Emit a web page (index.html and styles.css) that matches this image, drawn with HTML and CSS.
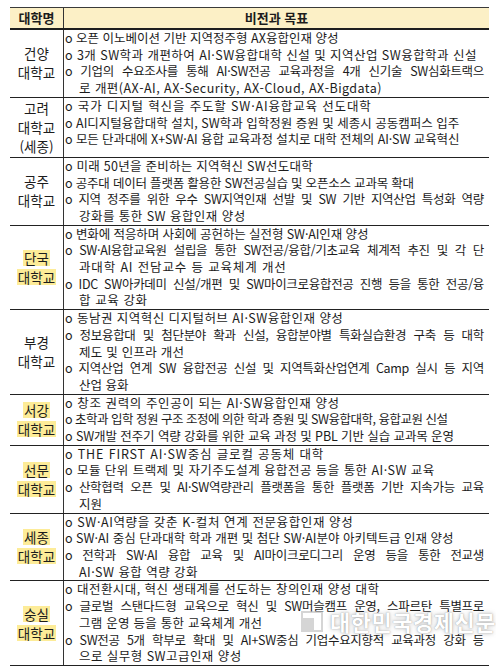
FILE: index.html
```html
<!DOCTYPE html>
<html lang="ko">
<head>
<meta charset="utf-8">
<title>대학별 비전과 목표</title>
<link rel="stylesheet" href="styles.css">
</head>
<body>
<div class="page">
  <div class="tbl">
    <div class="row head">
      <div class="uni"><span>대학명</span></div>
      <div class="goal">비전과 목표</div>
    </div>

    <div class="row">
      <div class="uni"><span>건양</span><span>대학교</span></div>
      <div class="goal">
        <div class="ln">o 오픈 이노베이션 기반 지역정주형 AX융합인재 양성</div>
        <div class="ln p4">o 3개 SW학과 개편하여 AI·SW융합대학 신설 및 지역산업 SW융합학과 신설</div>
        <div class="ln j">o 기업의 수요조사를 통해 AI·SW전공 교육과정을 4개 신기술 SW심화트랙으</div>
        <div class="ln c p4">로 개편(AX-AI, AX-Security, AX-Cloud, AX-Bigdata)</div>
      </div>
    </div>

    <div class="row">
      <div class="uni"><span>고려</span><span>대학교</span><span>(세종)</span></div>
      <div class="goal">
        <div class="ln p8">o 국가 디지털 혁신을 주도할 SW·AI융합교육 선도대학</div>
        <div class="ln">o AI디지털융합대학 설치, SW학과 입학정원 증원 및 세종시 공동캠퍼스 입주</div>
        <div class="ln m1">o 모든 단과대에 X+SW·AI 융합 교육과정 설치로 대학 전체의 AI·SW 교육혁신</div>
      </div>
    </div>

    <div class="row">
      <div class="uni"><span>공주</span><span>대학교</span></div>
      <div class="goal">
        <div class="ln p2">o 미래 50년을 준비하는 지역혁신 SW선도대학</div>
        <div class="ln m2">o 공주대 데이터 플랫폼 활용한 SW전공실습 및 오픈소스 교과목 확대</div>
        <div class="ln j">o 지역 정주를 위한 우수 SW지역인재 선발 및 SW 기반 지역산업 특성화 역량</div>
        <div class="ln c p4">강화를 통한 SW 융합인재 양성</div>
      </div>
    </div>

    <div class="row">
      <div class="uni hl"><span>단국</span><span>대학교</span></div>
      <div class="goal">
        <div class="ln m1">o 변화에 적응하며 사회에 공헌하는 실전형 SW·AI인재 양성</div>
        <div class="ln j">o SW·AI융합교육원 설립을 통한 SW전공/융합/기초교육 체계적 추진 및 각 단</div>
        <div class="ln c p8">과대학 AI 전담교수 등 교육체계 개선</div>
        <div class="ln j">o IDC SW아카데미 신설/개편 및 SW마이크로융합전공 진행 등을 통한 전공/융</div>
        <div class="ln c p6">합 교육 강화</div>
      </div>
    </div>

    <div class="row">
      <div class="uni"><span>부경</span><span>대학교</span></div>
      <div class="goal">
        <div class="ln p4">o 동남권 지역혁신 디지털허브 AI·SW융합인재 양성</div>
        <div class="ln j">o 정보융합대 및 첨단분야 확과 신설, 융합분야별 특화실습환경 구축 등 대학</div>
        <div class="ln c p2">제도 및 인프라 개선</div>
        <div class="ln j">o 지역산업 연계 SW 융합전공 신설 및 지역특화산업연계 Camp 실시 등 지역</div>
        <div class="ln c">산업 융화</div>
      </div>
    </div>

    <div class="row">
      <div class="uni hl"><span>서강</span><span>대학교</span></div>
      <div class="goal">
        <div class="ln p6">o 창조 권력의 주인공이 되는 AI·SW융합인재 양성</div>
        <div class="ln m5">o 초학과 입학 정원 구조 조정에 의한 학과 증원 및 SW융합대학, 융합교원 신설</div>
        <div class="ln m1">o SW개발 전주기 역량 강화를 위한 교육 과정 및 PBL 기반 실습 교과목 운영</div>
      </div>
    </div>

    <div class="row">
      <div class="uni hl"><span>선문</span><span>대학교</span></div>
      <div class="goal">
        <div class="ln p8">o THE FIRST AI·SW중심 글로컬 공동체 대학</div>
        <div class="ln p4">o 모듈 단위 트랙제 및 자기주도설계 융합전공 등을 통한 AI·SW 교육</div>
        <div class="ln j">o 산학협력 오픈 및 AI·SW역량관리 플랫폼을 통한 플랫폼 기반 지속가능 교육</div>
        <div class="ln c">지원</div>
      </div>
    </div>

    <div class="row">
      <div class="uni hl"><span>세종</span><span>대학교</span></div>
      <div class="goal">
        <div class="ln p6">o SW·AI역량을 갖춘 K-컬처 연계 전문융합인재 양성</div>
        <div class="ln">o SW·AI 중심 단과대학 학과 개편 및 첨단 SW·AI분야 아키텍트급 인재 양성</div>
        <div class="ln j">o 전학과 SW·AI 융합 교육 및 AI마이크로디그리 운영 등을 통한 전교생</div>
        <div class="ln c p4">AI·SW 융합 역량 강화</div>
      </div>
    </div>

    <div class="row">
      <div class="uni hl"><span>숭실</span><span>대학교</span></div>
      <div class="goal">
        <div class="ln p4">o 대전환시대, 혁신 생태계를 선도하는 창의인재 양성 대학</div>
        <div class="ln j">o 글로벌 스탠다드형 교육으로 혁신 및 SW머슬캠프 운영, 스파르탄 특별프로</div>
        <div class="ln c p2">그램 운영 등을 통한 교육체계 개선</div>
        <div class="ln j">o SW전공 5개 학부로 확대 및 AI+SW중심 기업수요지향적 교육과정 강화 등</div>
        <div class="ln c p4">으로 실무형 SW고급인재 양성</div>
      </div>
    </div>
  </div>

  <div class="wm">
    <svg class="wm-logo" width="24" height="24" viewBox="0 0 24 24" aria-hidden="true">
      <rect x="1" y="2" width="22" height="21" fill="#bdbdbd" opacity="0.75"/>
      <rect x="3" y="4" width="18" height="5" fill="#ffffff"/>
      <rect x="14" y="9" width="7" height="12" fill="#ffffff"/>
    </svg>
    <span class="wm-text">대한민국경제신문</span>
  </div>
</div>
</body>
</html>
```

FILE: styles.css
```css
* {
  box-sizing: border-box;
  margin: 0;
  padding: 0;
}

html,
body {
  background: #ffffff;
}

body {
  font-family: "Noto Sans CJK KR", "Noto Sans", sans-serif;
  font-size: 12.5px;
  color: #1c1c1c;
}

.page {
  position: relative;
  height: 671px;
  padding: 7px 0 0 10px;
}

.tbl {
  width: 479px;
  border-top: 1px solid #3a3a3a;
}

.row {
  display: grid;
  grid-template-columns: 54px 1fr;
  border-bottom: 1px solid #222222;
}

.row.head {
  border-bottom: 2px solid #1e1e1e;
  background: #fcf0c6;
}

.uni {
  display: flex;
  flex-direction: column;
  align-items: center;
  justify-content: center;
  border-right: 1px solid #333333;
  font-size: 13.5px;
  line-height: 19px;
  padding: 1px 0;
}

.head .uni,
.head .goal {
  font-weight: 700;
  font-size: 13px;
  line-height: 20px;
  padding: 0;
  text-align: center;
}

.hl span {
  background: #fdec98;
  line-height: 16px;
  margin: 1.5px 0;
  padding: 0 1px;
}

.goal {
  padding: 0 5px 0 1px;
  line-height: 16.7px;
}

.ln {
  white-space: nowrap;
}

.ln.c {
  padding-left: 14px;
}

.j {
  white-space: normal;
  text-align: justify;
  text-align-last: justify;
  letter-spacing: -0.3px;
}

.m5 {
  letter-spacing: -0.5px;
}

.m2 {
  letter-spacing: -0.2px;
}

.m1 {
  letter-spacing: -0.1px;
}

.p2 {
  letter-spacing: 0.25px;
}

.p4 {
  letter-spacing: 0.45px;
}

.p6 {
  letter-spacing: 0.6px;
}

.p8 {
  letter-spacing: 0.85px;
}

.p11 {
  letter-spacing: 1.1px;
}

.wm {
  position: absolute;
  left: 300px;
  top: 605px;
  display: flex;
  align-items: center;
  gap: 6px;
  opacity: 0.85;
}

.wm-text {
  font-size: 22px;
  font-weight: 700;
  letter-spacing: 0.5px;
  color: #ffffff;
  text-shadow: 0 0 1px rgba(90, 90, 90, 0.7), 0 0 4px rgba(120, 120, 120, 0.6);
}
```
